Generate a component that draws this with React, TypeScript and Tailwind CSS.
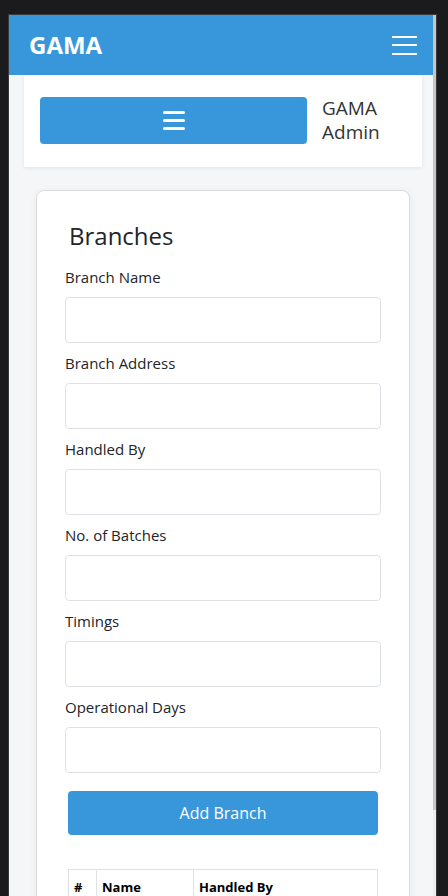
import React from 'react'

const fields = [
  'Branch Name',
  'Branch Address',
  'Handled By',
  'No. of Batches',
  'Timings',
  'Operational Days',
]

function Bars({ className }: { className?: string }) {
  return (
    <svg className={className} viewBox="0 0 22 19" fill="none">
      <rect x="0" y="0" width="22" height="3" rx="1.5" fill="white" />
      <rect x="0" y="8" width="22" height="3" rx="1.5" fill="white" />
      <rect x="0" y="16" width="22" height="3" rx="1.5" fill="white" />
    </svg>
  )
}

export default function App() {
  return (
    <div
      className="w-[448px] h-[896px] overflow-hidden bg-[#1b1b1d] pl-[8px] pt-[14px]"
      style={{ fontFamily: '"Open Sans", "Noto Sans", sans-serif' }}
    >
      <div className="w-[429px] h-[900px] border border-[#3a3a3a] flex">
        {/* Page */}
        <div className="w-[424px] bg-[#f5f6f8]">
          {/* Navbar */}
          <header className="h-[60px] bg-[#3897db] flex items-center justify-between pl-[20px] pr-[16px]">
            <span className="text-white font-bold text-[24px] leading-none">GAMA</span>
            <div className="w-[25px] flex flex-col gap-[6.5px]">
              <span className="block h-[2px] bg-white" />
              <span className="block h-[2px] bg-white" />
              <span className="block h-[2px] bg-white" />
            </div>
          </header>

          {/* Sidebar toggle card */}
          <div className="ml-[15px] w-[398px] bg-white shadow-[0_1px_4px_rgba(0,0,0,0.08)] pt-[21px] pb-[23px] pl-[16px] flex items-center gap-[15px]">
            <button className="w-[267px] h-[47px] rounded-[4px] bg-[#3897db] flex items-center justify-center">
              <Bars className="w-[22px] h-[19px]" />
            </button>
            <div className="text-[19px] leading-[24px] text-[#333]">
              GAMA
              <br />
              Admin
            </div>
          </div>

          {/* Branches card */}
          <div className="mt-[23px] ml-[27px] w-[374px] bg-white border border-[#dcdcdc] rounded-[8px] shadow-[0_2px_10px_rgba(0,0,0,0.06)] pt-[29px] px-[28px] pb-[40px]">
            <h2 className="ml-[4px] text-[24px] leading-[32px] text-[#212529]">Branches</h2>
            <div className="mt-[14px] flex flex-col">
              {fields.map((f) => (
                <div key={f} className="flex flex-col pb-[9px]">
                  <label className="text-[15px] leading-[22px] text-[#212529]">{f}</label>
                  <input className="mt-[9px] h-[46px] w-[316px] border border-[#dee2e6] rounded-[4px] bg-white" />
                </div>
              ))}
            </div>
            <button className="mt-[9px] mx-[3px] w-[310px] h-[44px] rounded-[4px] bg-[#3897db] text-white text-[16px]">
              Add Branch
            </button>

            <table className="mt-[34px] mx-[3px] w-[310px] border-collapse text-[13px] text-black">
              <thead>
                <tr>
                  <th className="w-[28px] border border-[#dee2e6] text-left font-bold px-[5px] py-[8px]">#</th>
                  <th className="w-[97px] border border-[#dee2e6] text-left font-bold px-[5px] py-[8px]">Name</th>
                  <th className="border border-[#dee2e6] text-left font-bold px-[5px] py-[8px]">Handled By</th>
                </tr>
              </thead>
            </table>
          </div>
        </div>

        {/* Scrollbar */}
        <div className="w-[3px] flex flex-col">
          <div className="h-[795px] bg-[#c6c6c6]" />
          <div className="flex-1 bg-[#ededed]" />
        </div>
      </div>
    </div>
  )
}
